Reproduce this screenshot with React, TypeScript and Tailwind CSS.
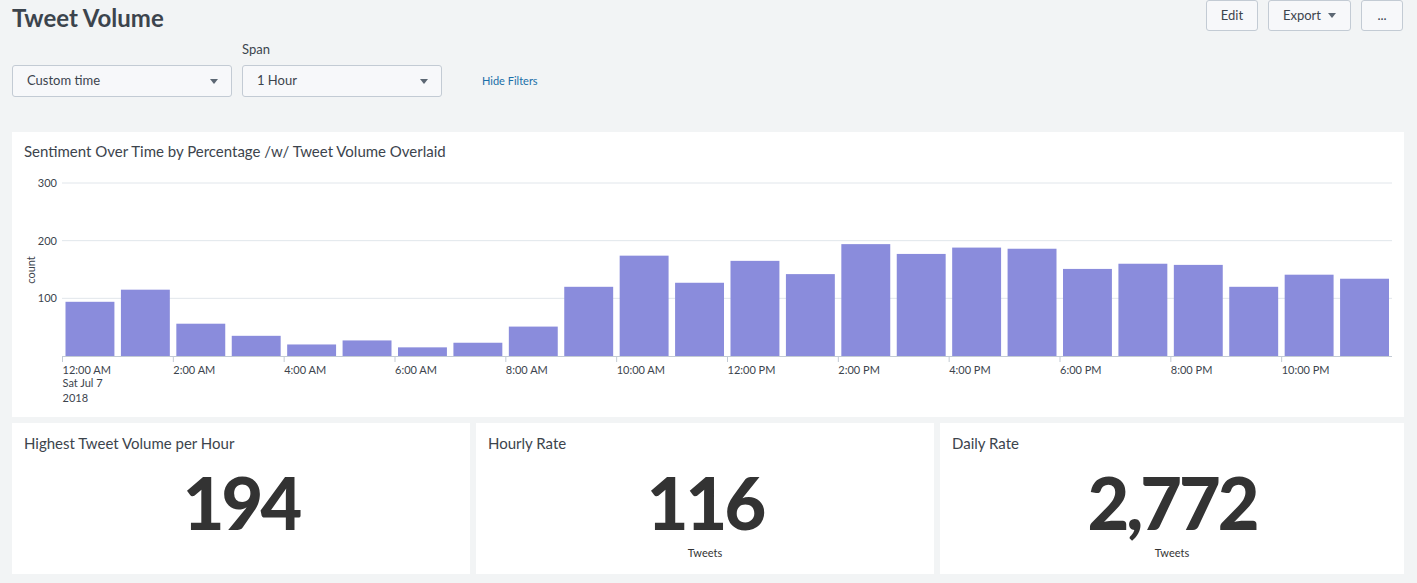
const counts = [94, 115, 56, 35, 20, 27, 15, 23, 51, 120, 174, 127, 165, 142, 194, 177, 188, 186, 151, 160, 158, 120, 141, 134]

const xLabels = ['12:00 AM', '2:00 AM', '4:00 AM', '6:00 AM', '8:00 AM', '10:00 AM', '12:00 PM', '2:00 PM', '4:00 PM', '6:00 PM', '8:00 PM', '10:00 PM']

const PLOT_LEFT = 50
const PLOT_RIGHT = 1380
const BASE = 194
const SCALE = 173 / 300

function Caret() {
  return (
    <svg width="8" height="5" viewBox="0 0 8 5" className="shrink-0">
      <path d="M0 0h8L4 5z" fill="#5c6773" />
    </svg>
  )
}

function Select({ label, width }: { label: string; width: string }) {
  return (
    <div className={`flex h-[32px] items-center justify-between rounded-[3px] border border-[#c3cbd4] bg-[#f7f8fa] pl-[14px] pr-[13px] text-[13px] text-[#3c444d] ${width}`}>
      <span>{label}</span>
      <Caret />
    </div>
  )
}

function VolumeChart() {
  const slot = (PLOT_RIGHT - PLOT_LEFT) / counts.length
  return (
    <svg width="1392" height="255" viewBox="0 0 1392 255" className="block">
      {[300, 200, 100].map((v) => {
        const y = BASE - v * SCALE
        return (
          <g key={v}>
            <line x1={PLOT_LEFT} x2={PLOT_RIGHT} y1={y} y2={y} stroke="#e1e6eb" />
            <text x={45} y={y + 4} textAnchor="end" fontSize="11" fill="#3c444d">
              {v}
            </text>
          </g>
        )
      })}
      <text x={23} y={108} fontSize="11" fill="#3c444d" textAnchor="middle" transform="rotate(-90 23 108)">
        count
      </text>
      {counts.map((c, i) => {
        const h = c * SCALE
        return <rect key={i} x={PLOT_LEFT + i * slot + 3.5} y={BASE - h} width={slot - 6.5} height={h} fill="#8a8cdc" />
      })}
      <line x1={PLOT_LEFT} x2={PLOT_RIGHT} y1={BASE + 0.5} y2={BASE + 0.5} stroke="#c3cbd4" />
      {xLabels.map((l, i) => {
        const x = PLOT_LEFT + i * slot * 2 + 0.5
        return (
          <g key={l}>
            <line x1={x} x2={x} y1={BASE} y2={BASE + 6} stroke="#c3cbd4" />
            <text x={x} y={212} fontSize="11" fill="#3c444d">
              {l}
            </text>
          </g>
        )
      })}
      <text x={PLOT_LEFT + 0.5} y={225} fontSize="11" fill="#3c444d">
        Sat Jul 7
      </text>
      <text x={PLOT_LEFT + 0.5} y={240} fontSize="11" fill="#3c444d">
        2018
      </text>
    </svg>
  )
}

function SingleValue({ title, value, unit }: { title: string; value: string; unit?: string }) {
  return (
    <div className="flex h-[151px] flex-col bg-white px-[12px] pt-[10px]">
      <div className="text-[15px] leading-[20px] text-[#3c444d]">{title}</div>
      <div className="mt-[9px] text-center text-[72px] font-black leading-[80px] tracking-[-3px] text-[#333333]">{value}</div>
      {unit ? <div className="mt-[3px] text-center text-[11px] text-[#333333]">{unit}</div> : null}
    </div>
  )
}

export default function App() {
  return (
    <div className="h-[583px] w-full overflow-hidden bg-[#f2f4f5] pl-[12px] pr-[13px] font-['Lato','Open_Sans',sans-serif] text-[#3c444d]">
      <div className="flex h-[32px] items-start justify-between">
        <h1 className="pt-[2px] text-[24px] font-bold leading-[32px] text-[#3c444d]">Tweet Volume</h1>
        <div className="mr-[1px] flex gap-[10px]">
          {['Edit', 'Export', '...'].map((b) => (
            <button
              key={b}
              type="button"
              className={`flex h-[31px] items-center justify-center gap-[7px] rounded-[3px] border border-[#c3cbd4] bg-[#f7f8fa] text-[13px] text-[#3c444d] ${
                b === 'Edit' ? 'w-[52px]' : b === 'Export' ? 'w-[83px]' : 'w-[42px]'
              }`}
            >
              {b}
              {b === 'Export' ? <Caret /> : null}
            </button>
          ))}
        </div>
      </div>

      <div className="mt-[9px] flex items-end">
        <Select label="Custom time" width="w-[220px]" />
        <div className="ml-[10px] flex flex-col">
          <span className="mb-[8px] text-[13px] leading-[16px]">Span</span>
          <Select label="1 Hour" width="w-[200px]" />
        </div>
        <a className="ml-[40px] flex h-[32px] items-center text-[11px] text-[#1a6fa8]">Hide Filters</a>
      </div>

      <div className="mt-[35px] h-[285px] bg-white">
        <div className="px-[12px] pt-[9px] text-[15px] leading-[21px] text-[#3c444d]">Sentiment Over Time by Percentage /w/ Tweet Volume Overlaid</div>
        <VolumeChart />
      </div>

      <div className="mt-[6px] grid grid-cols-[458px_458px_1fr] gap-[6px]">
        <SingleValue title="Highest Tweet Volume per Hour" value="194" />
        <SingleValue title="Hourly Rate" value="116" unit="Tweets" />
        <SingleValue title="Daily Rate" value="2,772" unit="Tweets" />
      </div>
    </div>
  )
}
